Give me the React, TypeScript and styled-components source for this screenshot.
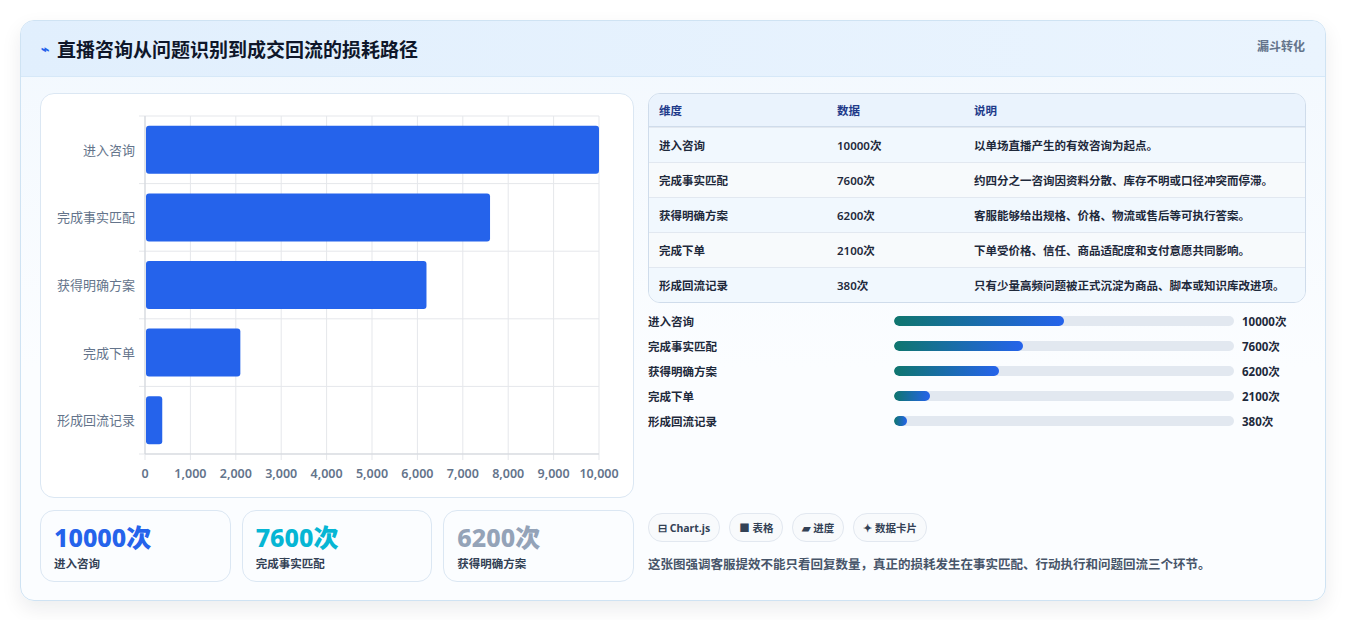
import styled, { createGlobalStyle } from 'styled-components';

const GlobalStyle = createGlobalStyle`
  body {
    margin: 0;
    background: #ffffff;
    font-family: "Noto Sans", "Noto Sans CJK SC", sans-serif;
  }
`;

const rows = [
  { name: '进入咨询', value: 10000, note: '以单场直播产生的有效咨询为起点。' },
  { name: '完成事实匹配', value: 7600, note: '约四分之一咨询因资料分散、库存不明或口径冲突而停滞。' },
  { name: '获得明确方案', value: 6200, note: '客服能够给出规格、价格、物流或售后等可执行答案。' },
  { name: '完成下单', value: 2100, note: '下单受价格、信任、商品适配度和支付意愿共同影响。' },
  { name: '形成回流记录', value: 380, note: '只有少量高频问题被正式沉淀为商品、脚本或知识库改进项。' },
];

const App = () => {
  return (
    <>
      <GlobalStyle />
      <Page>
        <Card>
          <Header>
            <Title>
              <TitleIcon>⌁</TitleIcon>
              直播咨询从问题识别到成交回流的损耗路径
            </Title>
            <Tag>漏斗转化</Tag>
          </Header>
          <Body>
            <LeftCol>
              <ChartPanel>
                <BarChart />
              </ChartPanel>
              <Stats>
                <Stat>
                  <StatValue color="#2563eb">10000次</StatValue>
                  <StatLabel>进入咨询</StatLabel>
                </Stat>
                <Stat>
                  <StatValue color="#06b6d4">7600次</StatValue>
                  <StatLabel>完成事实匹配</StatLabel>
                </Stat>
                <Stat>
                  <StatValue color="#94a3b8">6200次</StatValue>
                  <StatLabel>获得明确方案</StatLabel>
                </Stat>
              </Stats>
            </LeftCol>
            <RightCol>
              <Table>
                <thead>
                  <tr>
                    <Th style={{ width: 158 }}>维度</Th>
                    <Th style={{ width: 117 }}>数据</Th>
                    <Th>说明</Th>
                  </tr>
                </thead>
                <tbody>
                  {rows.map((r, i) => (
                    <Tr key={r.name} odd={i % 2 === 1}>
                      <Td>{r.name}</Td>
                      <Td>{r.value}次</Td>
                      <Td>{r.note}</Td>
                    </Tr>
                  ))}
                </tbody>
              </Table>
              <Progress>
                {rows.map((r) => (
                  <ProgRow key={r.name}>
                    <ProgLabel>{r.name}</ProgLabel>
                    <Track>
                      <Fill style={{ width: `${Math.max((r.value / 20000) * 100, 3.8)}%` }} />
                    </Track>
                    <ProgValue>{r.value}次</ProgValue>
                  </ProgRow>
                ))}
              </Progress>
              <Spacer />
              <Chips>
                <Chip>⊟ Chart.js</Chip>
                <Chip>■ 表格</Chip>
                <Chip>▰ 进度</Chip>
                <Chip>✦ 数据卡片</Chip>
              </Chips>
              <Caption>这张图强调客服提效不能只看回复数量，真正的损耗发生在事实匹配、行动执行和问题回流三个环节。</Caption>
            </RightCol>
          </Body>
        </Card>
      </Page>
    </>
  );
};

const BarChart = () => {
  const x0 = 104;
  const x1 = 558;
  const y0 = 22;
  const y1 = 360;
  const band = (y1 - y0) / 5;
  const sx = (v: number) => x0 + ((x1 - x0) * v) / 10000;
  return (
    <svg width="594" height="403" viewBox="0 0 594 403">
      {Array.from({ length: 11 }).map((_, i) => (
        <g key={i}>
          <line x1={sx(i * 1000)} x2={sx(i * 1000)} y1={y0} y2={y1 + 6} stroke="#e5e7eb" />
          <text x={sx(i * 1000)} y={y1 + 24} fontSize="12.5" fill="#64748b" textAnchor="middle" fontFamily="Noto Sans" fontWeight="600">
            {(i * 1000).toLocaleString('en-US')}
          </text>
        </g>
      ))}
      {Array.from({ length: 6 }).map((_, i) => (
        <line key={i} x1={x0 - 6} x2={x1} y1={y0 + band * i} y2={y0 + band * i} stroke="#e5e7eb" />
      ))}
      <line x1={x0} x2={x0} y1={y0} y2={y1} stroke="#d1d5db" />
      <line x1={x0} x2={x1} y1={y1} y2={y1} stroke="#d1d5db" />
      {rows.map((r, i) => {
        const cy = y0 + band * i + band / 2;
        return (
          <g key={r.name}>
            <rect x={x0 + 1} y={cy - 24} width={sx(r.value) - x0 - 1} height={48} rx={3} fill="#2563eb" />
            <text x={x0 - 10} y={cy + 5} fontSize="13" fill="#64748b" textAnchor="end" fontFamily="Noto Sans CJK SC">
              {r.name}
            </text>
          </g>
        );
      })}
    </svg>
  );
};

const Page = styled.div`
  padding: 20px 20px 21px 20px;
`;

const Card = styled.div`
  width: 1304px;
  border: 1px solid #cfe3f3;
  border-radius: 14px;
  background: linear-gradient(180deg, #f2f8fe 0%, #fbfdff 60%);
  box-shadow: 0 8px 20px rgba(15, 23, 42, 0.08);
  overflow: hidden;
`;

const Header = styled.div`
  height: 55px;
  display: flex;
  align-items: center;
  justify-content: space-between;
  padding: 0 20px;
  background: linear-gradient(90deg, #e1effd, #eaf4fe);
  border-bottom: 1px solid #d6e8f8;
`;

const Title = styled.h1`
  margin: 0;
  font-size: 19px;
  font-weight: 700;
  color: #0f172a;
  display: flex;
  align-items: center;
  gap: 8px;
`;

const TitleIcon = styled.span`
  color: #2563eb;
  font-size: 14px;
`;

const Tag = styled.span`
  font-size: 12px;
  font-weight: 700;
  color: #64748b;
  align-self: flex-start;
  margin-top: 16px;
`;

const Body = styled.div`
  display: flex;
  gap: 14px;
  padding: 16px 18px 18px 19px;
`;

const LeftCol = styled.div`
  width: 594px;
  display: flex;
  flex-direction: column;
  gap: 12px;
`;

const ChartPanel = styled.div`
  height: 403px;
  border: 1px solid #dbe7f3;
  border-radius: 14px;
  background: #fff;
  overflow: hidden;
`;

const Stats = styled.div`
  display: grid;
  grid-template-columns: repeat(3, 1fr);
  gap: 11px;
`;

const Stat = styled.div`
  height: 72px;
  box-sizing: border-box;
  padding: 10px 13px;
  border: 1px solid #dbe7f3;
  border-radius: 14px;
  background: #fbfdff;
`;

const StatValue = styled.div<{ color: string }>`
  font-size: 25px;
  font-weight: 800;
  line-height: 32px;
  color: ${({ color }) => color};
`;

const StatLabel = styled.div`
  font-size: 11.5px;
  font-weight: 600;
  color: #334155;
  margin-top: 2px;
`;

const RightCol = styled.div`
  width: 658px;
  display: flex;
  flex-direction: column;
`;

const Table = styled.table`
  width: 100%;
  border-collapse: separate;
  border-spacing: 0;
  border: 1px solid #cfdceb;
  border-radius: 12px;
  overflow: hidden;
  font-size: 11.5px;
  font-weight: 600;
  color: #1e293b;
`;

const Th = styled.th`
  text-align: left;
  height: 32px;
  padding: 0 10px;
  background: #eaf3fd;
  color: #1e3a8a;
  border-bottom: 1px solid #cfdceb;
`;

const Tr = styled.tr<{ odd: boolean }>`
  background: ${({ odd }) => (odd ? '#f7fafc' : '#f1f8fe')};
`;

const Td = styled.td`
  height: 34px;
  padding: 0 10px;
  border-top: 1px solid #e2e8f0;
`;

const Progress = styled.div`
  margin-top: 11px;
  display: flex;
  flex-direction: column;
  gap: 12px;
`;

const ProgRow = styled.div`
  display: flex;
  align-items: center;
  height: 13px;
  font-size: 11.5px;
  font-weight: 600;
  color: #1e293b;
`;

const ProgLabel = styled.span`
  width: 246px;
`;

const Track = styled.div`
  width: 340px;
  height: 10px;
  border-radius: 5px;
  background: #e2e8f0;
  overflow: hidden;
`;

const Fill = styled.div`
  height: 100%;
  border-radius: 5px;
  background: linear-gradient(90deg, #0f766e, #2563eb);
`;

const ProgValue = styled.span`
  margin-left: 8px;
  font-weight: 700;
`;

const Spacer = styled.div`
  flex: 1;
`;

const Chips = styled.div`
  display: flex;
  gap: 9px;
`;

const Chip = styled.span`
  height: 27px;
  display: inline-flex;
  align-items: center;
  padding: 0 9px;
  border: 1px solid #e2e8f0;
  border-radius: 14px;
  background: #f8fafc;
  font-size: 10.5px;
  font-weight: 700;
  color: #334155;
`;

const Caption = styled.p`
  margin: 12px 0 9px;
  font-size: 12.5px;
  font-weight: 600;
  color: #475569;
`;

export default App;
